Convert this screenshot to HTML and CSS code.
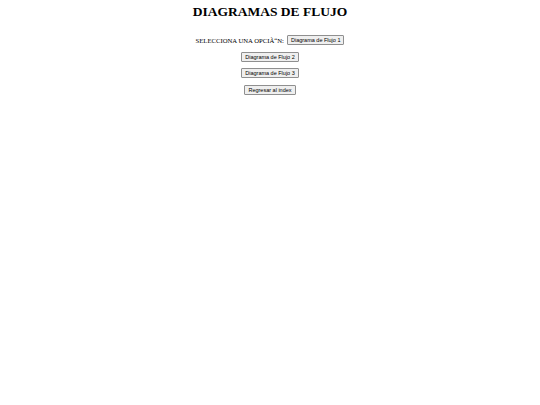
FILE: index.html
```html
<!DOCTYPE html>
<html lang="es">
<head>
    <meta charset="UTF-8">
    <meta name="viewport" content="width=device-width, initial-scale=1.0">
    <title>Diagramas de Flujo</title>
    <link rel="stylesheet" href="styles.css">
</head>
<body>
    <h1 class="title">DIAGRAMAS DE FLUJO</h1>
    <div class="menu">
        <div class="menu-row">
            <span class="label">SELECCIONA UNA OPCIÃ“N:</span>
            <button type="button">Diagrama de Flujo 1</button>
        </div>
        <div class="menu-row">
            <button type="button">Diagrama de Flujo 2</button>
        </div>
        <div class="menu-row">
            <button type="button">Diagrama de Flujo 3</button>
        </div>
        <div class="menu-row">
            <button type="button">Regresar al index</button>
        </div>
    </div>
</body>
</html>
```

FILE: styles.css
```css
body {
    font-family: "Liberation Serif", "Times New Roman", serif;
    background-color: #fff;
    color: #000;
    margin: 0;
    text-align: center;
}
.title {
    font-size: 13.5px;
    line-height: 18px;
    margin: 0;
    padding-top: 3px;
}
.menu {
    display: flex;
    flex-direction: column;
    gap: 6.5px;
    padding-top: 14px;
}
.menu-row {
    display: flex;
    justify-content: center;
    align-items: center;
    gap: 3px;
    height: 10px;
}
.label {
    font-size: 6.7px;
}
button {
    font-family: "Liberation Sans", Arial, sans-serif;
    font-size: 5.5px;
    line-height: 8px;
    padding: 0 3px;
    background-color: #efefef;
    color: #000;
    border: 1px solid #8f8f8f;
    border-radius: 1px;
}
```
